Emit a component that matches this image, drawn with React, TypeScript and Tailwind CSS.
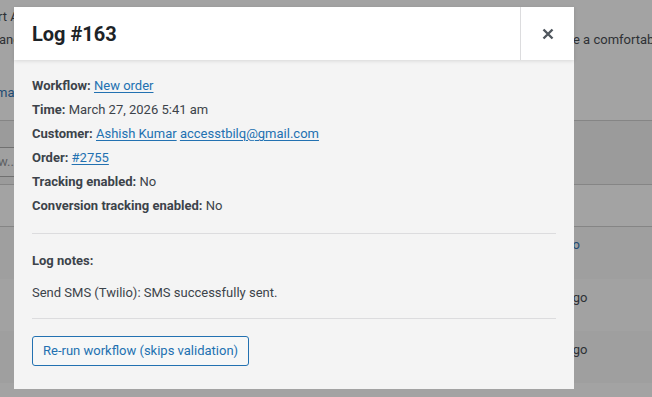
import React from "react";

const font = { fontFamily: "Roboto, 'Noto Sans', sans-serif" };

function Background() {
  return (
    <div className="h-[397px] w-[652px] overflow-hidden bg-[#a3a3a3] text-[13px] text-[#2e3135]" style={font}>
      <div className="h-[120px]">
        <div className="pt-[8px] leading-[18px] ml-[-2px] whitespace-nowrap">rt Automations</div>
        <div className="mt-[5px] flex leading-[18px] whitespace-nowrap">
          <span className="w-[574px] shrink-0 ml-[-1px]">ance</span>
          <span>e a comfortable</span>
        </div>
        <div className="mt-[35px] ml-[-4px] leading-[18px] text-[#1e4b73]">may</div>
      </div>
      <div className="border-t border-[#858585] bg-[#9b9b9b]">
        <div className="flex h-[63px]">
          <div className="w-[14px] flex flex-col">
            <div className="h-[26px]" />
            <div className="h-[30px] border-y border-[#707070] bg-[#a0a0a0] text-[#5d5f62] leading-[28px] whitespace-nowrap overflow-hidden ml-[-2px]">w...</div>
          </div>
          <div className="flex-1" />
        </div>
      </div>
      <div className="border-t border-[#858585] h-[42px] bg-[#a3a3a3]" />
      <div className="border-t border-[#858585] h-[53px] bg-[#9f9f9f] pt-[9px] leading-[18px]">
        <span className="ml-[516px] text-[#1e4b73] whitespace-nowrap">4 mins ago</span>
      </div>
      <div className="h-[52px] bg-[#a2a2a2] pt-[10px] leading-[18px]">
        <span className="ml-[519px] whitespace-nowrap">2 hours ago</span>
      </div>
      <div className="h-[52px] bg-[#9f9f9f] pt-[10px] leading-[18px]">
        <span className="ml-[519px] whitespace-nowrap">2 hours ago</span>
      </div>
      <div className="h-[20px] bg-[#a3a3a3]" />
    </div>
  );
}

function Line({ label, children }: { label: string; children: React.ReactNode }) {
  return (
    <div className="h-[24px] leading-[24px] whitespace-nowrap">
      <span className="font-bold">{label}</span> {children}
    </div>
  );
}

const linkCls = "text-[#2271b1] underline underline-offset-[2px]";

export default function App() {
  return (
    <div className="relative w-[652px] h-[397px] overflow-hidden">
      <Background />
      <div
        className="absolute left-[14px] top-[7px] w-[560px] h-[382px] bg-[#f4f4f4] text-[13px] text-[#3c434a]"
        style={font}
      >
        <div className="relative flex h-[53px] bg-white shadow-[0_1px_4px_rgba(0,0,0,0.12)]">
          <div className="flex-1 flex items-center pl-[18px] text-[20px] font-bold text-[#1d2327]">Log #163</div>
          <div className="w-[54px] border-l border-[#dcdcde] flex items-center justify-center">
            <svg width="12" height="12" viewBox="0 0 12 12">
              <path d="M1.5 1.5 L10.5 10.5 M10.5 1.5 L1.5 10.5" stroke="#50575e" strokeWidth="2.4" strokeLinecap="butt" />
            </svg>
          </div>
        </div>
        <div className="px-[18px] pt-[14px]">
          <Line label="Workflow:">
            <a className={linkCls}>New order</a>
          </Line>
          <Line label="Time:">March 27, 2026 5:41 am</Line>
          <Line label="Customer:">
            <a className={linkCls}>Ashish Kumar</a> <a className={linkCls}>accesstbilq@gmail.com</a>
          </Line>
          <Line label="Order:">
            <a className={linkCls}>#2755</a>
          </Line>
          <Line label="Tracking enabled:">No</Line>
          <Line label="Conversion tracking enabled:">No</Line>
          <div className="mt-[15px] border-t border-[#dcdcde]" />
          <div className="mt-[15px] h-[24px] leading-[24px] font-bold">Log notes:</div>
          <div className="mt-[8px] h-[24px] leading-[24px]">Send SMS (Twilio): SMS successfully sent.</div>
          <div className="mt-[13px] border-t border-[#dcdcde]" />
          <button className="mt-[17px] h-[30px] px-[10px] rounded-[3px] border border-[#2271b1] bg-[#f6f7f7] text-[#2271b1] text-[13px] leading-[28px]">
            Re-run workflow (skips validation)
          </button>
        </div>
      </div>
    </div>
  );
}
